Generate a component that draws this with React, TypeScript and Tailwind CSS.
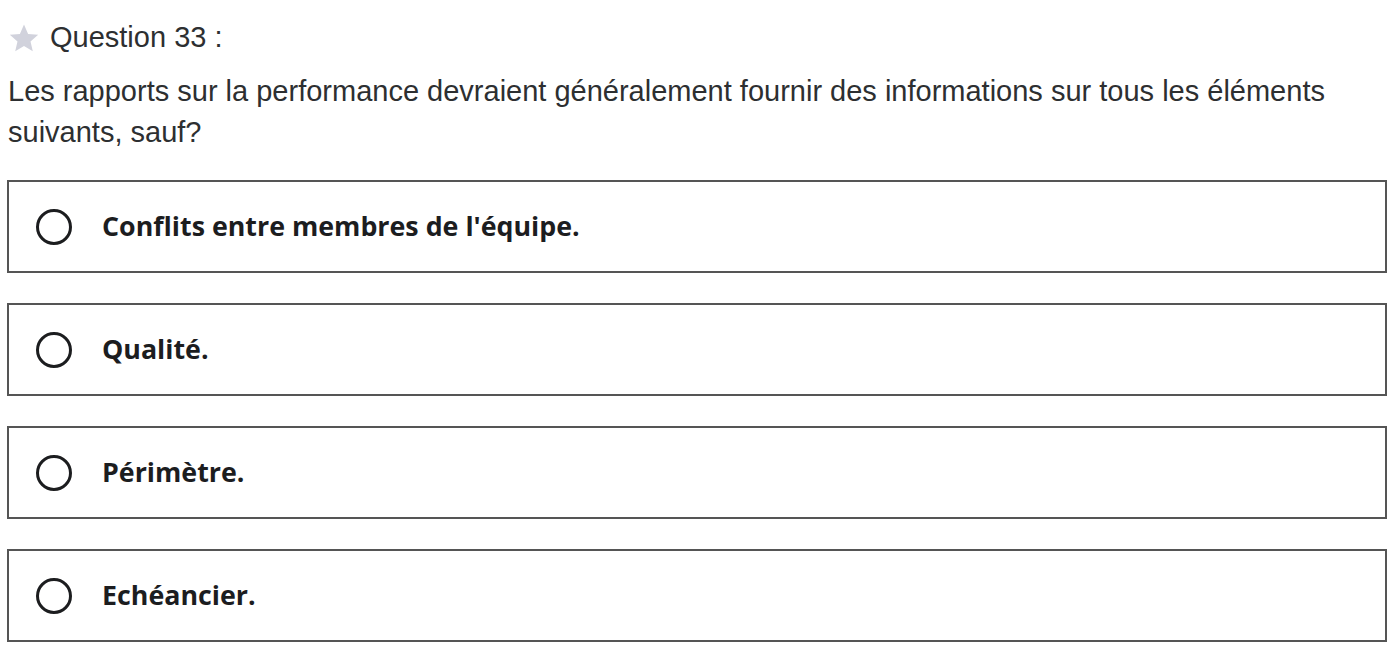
import React from "react";

const options = [
  "Conflits entre membres de l'équipe.",
  "Qualité.",
  "Périmètre.",
  "Echéancier.",
];

export default function App() {
  return (
    <div className="w-[1400px] h-[657px] bg-white overflow-hidden pl-[7px] pr-[13px] pt-[22px]" style={{ fontFamily: '"Liberation Sans", Arial, sans-serif' }}>
      <div className="flex items-center h-[32px] text-[#2d2f31]">
        <svg width="34" height="34" viewBox="0 0 24 24" className="mr-[9px] shrink-0">
          <path d="M12 2.5l2.9 6.6 7.1.6-5.4 4.7 1.6 7-6.2-3.8-6.2 3.8 1.6-7L2 9.7l7.1-.6z" fill="#d1d2dc" />
        </svg>
        <span className="text-[29px]">Question 33 :</span>
      </div>
      <p className="mt-[17px] text-[29px] leading-[41px] text-[#2d2f31] pl-[1px] whitespace-nowrap">
        Les rapports sur la performance devraient généralement fournir des informations sur tous les éléments<br />suivants, sauf?
      </p>
      <div className="mt-[27px] flex flex-col gap-[30px]">
        {options.map((o) => (
          <div key={o} className="h-[93px] border-2 border-[#555555] flex items-center pl-[27px]">
            <span className="w-[36px] h-[36px] rounded-full border-[3px] border-[#1c1d1f] shrink-0" />
            <span className="ml-[30px] text-[26.8px] font-bold text-[#1c1d1f]" style={{ fontFamily: '"Open Sans", sans-serif' }}>{o}</span>
          </div>
        ))}
      </div>
    </div>
  );
}
